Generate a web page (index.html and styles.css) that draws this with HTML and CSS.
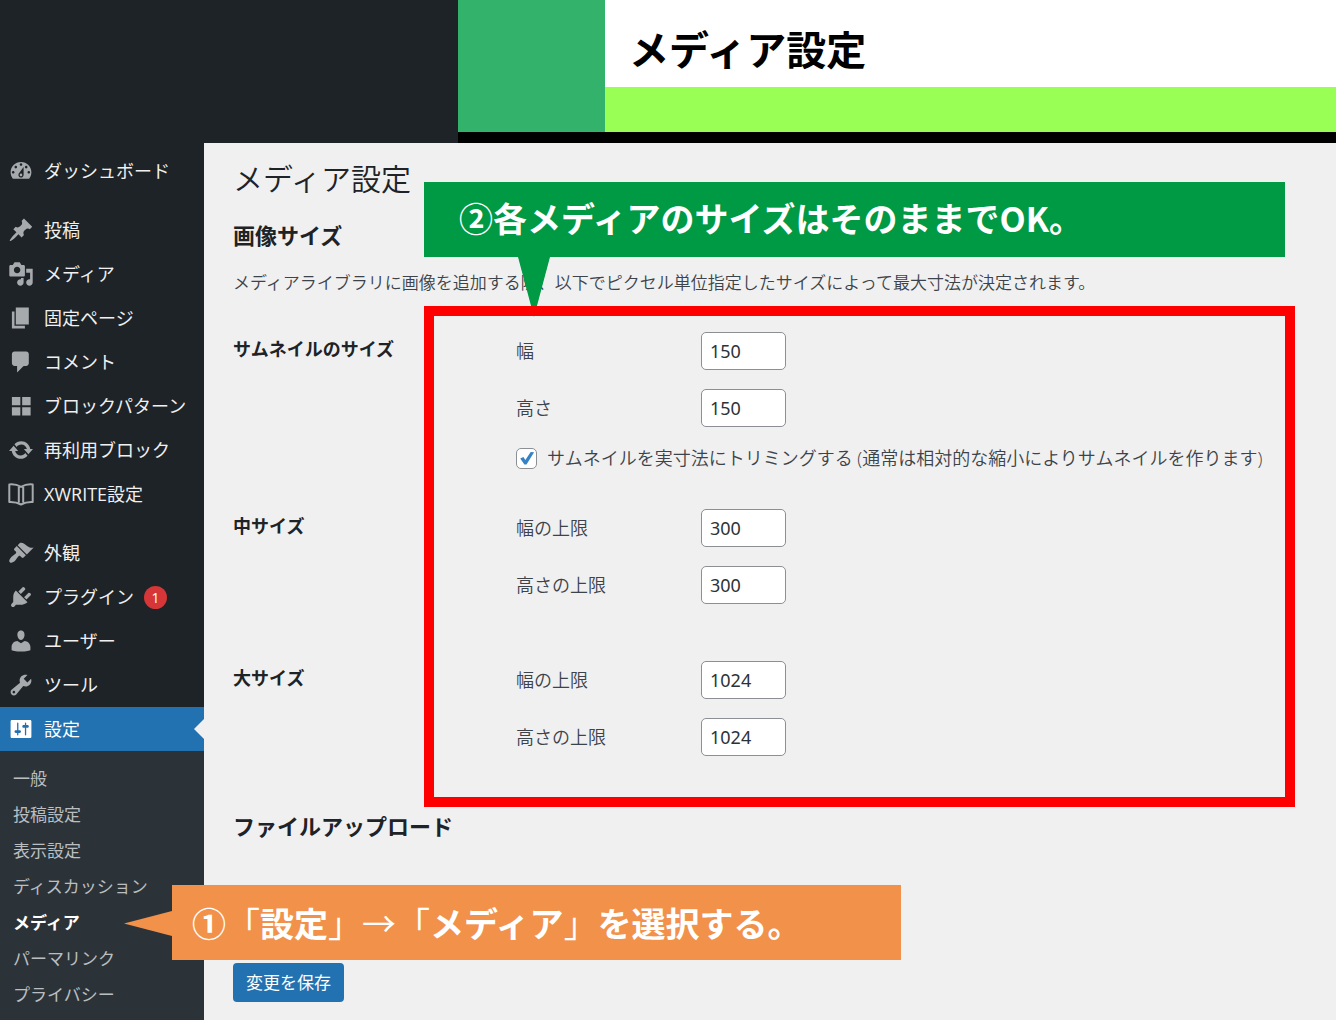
FILE: index.html
```html
<!DOCTYPE html>
<html lang="ja">
<head>
<meta charset="utf-8">
<meta name="viewport" content="width=device-width, initial-scale=1">
<title>メディア設定</title>
<link rel="stylesheet" href="styles.css">
</head>
<body>
<header class="banner">
  <div class="banner-panel">
    <div class="banner-block"></div>
    <div class="banner-title">メディア設定</div>
    <div class="banner-stripe"></div>
  </div>
</header>
<div class="app">
  <nav class="sidebar" aria-label="メインメニュー">
    <ul class="menu">
      <li><a class="menu-link" href="#"><svg class="icon" viewBox="0 0 20 20"><path fill-rule="evenodd" d="M3.76 16h12.48c1.1-1.37 1.76-3.11 1.76-5 0-4.42-3.58-8-8-8s-8 3.58-8 8c0 1.89.66 3.63 1.76 5zM10 4c.55 0 1 .45 1 1s-.45 1-1 1-1-.45-1-1 .45-1 1-1zM6 6c.55 0 1 .45 1 1s-.45 1-1 1-1-.45-1-1 .45-1 1-1zm8 0c.55 0 1 .45 1 1s-.45 1-1 1-1-.45-1-1 .45-1 1-1zm-5.37 5.55L12 7v6c0 1.1-.9 2-2 2s-2-.9-2-2c0-.57.24-1.08.63-1.45zM4 10c.55 0 1 .45 1 1s-.45 1-1 1-1-.45-1-1 .45-1 1-1zm12 0c.55 0 1 .45 1 1s-.45 1-1 1-1-.45-1-1 .45-1 1-1zm-5 3c0-.55-.45-1-1-1s-1 .45-1 1 .45 1 1 1 1-.45 1-1z"/></svg>ダッシュボード</a></li>
      <li class="group-start"><a class="menu-link" href="#"><svg class="icon" viewBox="0 0 20 20"><path d="M10.44 3.02l1.82-1.82 6.36 6.35-1.83 1.82c-1.05-.68-2.48-.57-3.41.36l-.75.75c-.92.93-1.04 2.35-.35 3.41l-1.83 1.82-2.41-2.41-2.8 2.79c-.42.42-3.38 2.71-3.8 2.29s1.86-3.39 2.28-3.81l2.79-2.79L4.1 9.36l1.83-1.82c1.05.69 2.48.57 3.4-.36l.75-.75c.93-.92 1.05-2.35.36-3.41z"/></svg>投稿</a></li>
      <li><a class="menu-link" href="#"><svg class="icon" viewBox="0 0 20 20"><path fill-rule="evenodd" d="M13 11V4c0-.55-.45-1-1-1h-1.67L9 1H5L3.67 3H2c-.55 0-1 .45-1 1v7c0 .55.45 1 1 1h10c.55 0 1-.45 1-1zM7 4.5c1.38 0 2.5 1.12 2.5 2.5S8.38 9.5 7 9.5 4.5 8.38 4.5 7 5.62 4.5 7 4.5zM14 6h5v10.5c0 1.38-1.12 2.5-2.5 2.5S14 17.88 14 16.5s1.12-2.5 2.5-2.5c.17 0 .34.02.5.05V9h-3V6zm-4 8.05V13h2v3.5c0 1.38-1.12 2.5-2.5 2.5S7 17.88 7 16.5 8.12 14 9.5 14c.17 0 .34.02.5.05z"/></svg>メディア</a></li>
      <li><a class="menu-link" href="#"><svg class="icon" viewBox="0 0 20 20"><path d="M6 15V2h10v13H6zm-1 1h8v2H3V5h2v11z"/></svg>固定ページ</a></li>
      <li><a class="menu-link" href="#"><svg class="icon" viewBox="0 0 20 20"><path d="M5 2h9c1.1 0 2 .9 2 2v7c0 1.1-.9 2-2 2h-2l-5 5v-5H5c-1.1 0-2-.9-2-2V4c0-1.1.9-2 2-2z"/></svg>コメント</a></li>
      <li><a class="menu-link" href="#"><svg class="icon" viewBox="0 0 20 20"><path d="M3 3h6.500v6.500H3zM10.900 3h6.500v6.500h-6.500zM3 10.900h6.500v6.500H3zM10.900 10.900h6.500v6.500h-6.500z"/></svg>ブロックパターン</a></li>
      <li><a class="menu-link" href="#"><svg class="icon" viewBox="0 0 20 20"><path d="M10.200 3.280c3.530 0 6.430 2.610 6.920 6h2.080l-3.500 4-3.500-4h2.320c-.45-1.970-2.210-3.450-4.320-3.450-1.450 0-2.730.71-3.540 1.780L4.950 5.660C6.230 4.200 8.110 3.280 10.200 3.280zm-.4 13.440c-3.520 0-6.430-2.610-6.920-6H.8l3.500-4c1.170 1.330 2.330 2.670 3.500 4H5.480c.45 1.970 2.210 3.450 4.320 3.450 1.450 0 2.730-.71 3.540-1.780l1.710 1.950c-1.280 1.460-3.150 2.380-5.250 2.380z"/></svg>再利用ブロック</a></li>
      <li><a class="menu-link" href="#"><svg class="icon" viewBox="0 0 26 26"><path fill="none" stroke="currentColor" stroke-width="2" stroke-linejoin="round" d="M1.300 3.500C5 3.100 9 3.600 13 5.800 17 3.600 21 3.100 24.700 3.500v17.500C21 20.800 17 21.300 13 23.500 9 21.300 5 20.800 1.300 21zM10.800 6v15.500M15.200 6v15.500"/></svg>XWRITE設定</a></li>
      <li class="group-start"><a class="menu-link" href="#"><svg class="icon" viewBox="0 0 20 20"><path d="M14.480 11.060L7.410 3.990l1.500-1.500c.5-.56 2.300-.47 3.510.32 1.210.8 1.430 1.280 2.910 2.100 1.180.64 2.450 1.260 4.450.85zm-.71.71L6.700 4.700 4.930 6.470c-.39.39-.39 1.020 0 1.410l1.060 1.060c.39.39.39 1.030 0 1.420-.6.6-1.430 1.110-2.210 1.690-.35.26-.7.53-1.010.84C1.430 14.230.4 16.080 1.400 17.070c.99 1 2.840-.03 4.180-1.360.31-.31.58-.66.85-1.020.57-.78 1.080-1.610 1.690-2.210.39-.39 1.020-.39 1.410 0l1.060 1.060c.39.39 1.020.39 1.410 0z"/></svg>外観</a></li>
      <li><a class="menu-link" href="#"><svg class="icon" viewBox="0 0 20 20"><path d="M13.110 4.360L9.870 7.600 8 5.730l3.240-3.240c.35-.34 1.050-.2 1.560.32.52.51.66 1.210.31 1.550zm-8 1.770l.91-1.120 9.010 9.010-1.190.84c-.71.71-2.630 1.160-3.820 1.160H6.140L4.900 17.260c-.59.59-1.540.59-2.120 0-.59-.58-.59-1.530 0-2.120l1.240-1.240v-3.880c0-1.130.4-3.190 1.090-3.890zm7.260 3.970l3.240-3.240c.34-.35 1.040-.21 1.550.31.52.51.66 1.210.31 1.550l-3.240 3.250z"/></svg>プラグイン<span class="badge">1</span></a></li>
      <li><a class="menu-link" href="#"><svg class="icon" viewBox="0 0 20 20"><path d="M10 9.250c-2.270 0-2.730-3.440-2.730-3.440C7 4.020 7.820 2 9.970 2c2.160 0 2.980 2.020 2.710 3.810 0 0-.41 3.440-2.680 3.440zm0 2.570L12.720 10c2.390 0 4.520 2.330 4.520 4.530v2.490s-3.650 1.130-7.240 1.130c-3.650 0-7.240-1.130-7.240-1.130v-2.490c0-2.250 1.940-4.480 4.470-4.480z"/></svg>ユーザー</a></li>
      <li><a class="menu-link" href="#"><svg class="icon" viewBox="0 0 20 20"><path fill-rule="evenodd" d="M16.680 9.770c-1.340 1.340-3.300 1.670-4.950.99l-5.410 6.520c-.99.99-2.590.99-3.580 0s-.99-2.590 0-3.570l6.520-5.420c-.68-1.650-.35-3.610.99-4.950 1.280-1.280 3.120-1.620 4.720-1.060l-2.890 2.890 2.820 2.820 2.860-2.870c.53 1.580.18 3.390-1.080 4.650zM3.810 16.210c.4.39 1.040.39 1.430 0 .4-.4.4-1.040 0-1.430-.39-.4-1.030-.4-1.430 0-.39.39-.39 1.030 0 1.430z"/></svg>ツール</a></li>
      <li><a class="menu-link current" href="#"><svg class="icon" viewBox="0 0 20 20"><path fill-rule="evenodd" d="M18 16V4c0-.55-.45-1-1-1H3c-.55 0-1 .45-1 1v12c0 .55.45 1 1 1h14c.55 0 1-.45 1-1zM8 11h1c.55 0 1 .45 1 1s-.45 1-1 1H8v1.500c0 .28-.22.5-.5.5s-.5-.22-.5-.5V13H6c-.55 0-1-.45-1-1s.45-1 1-1h1V5.500c0-.28.22-.5.5-.5s.5.220.5.500V11zm5-2h-1c-.55 0-1-.45-1-1s.45-1 1-1h1V5.500c0-.28.22-.5.5-.5s.5.220.5.500V7h1c.55 0 1 .45 1 1s-.45 1-1 1h-1v5.500c0 .28-.22.5-.5.5s-.5-.22-.5-.5V9z"/></svg>設定</a></li>
    </ul>
    <ul class="submenu">
      <li><a class="submenu-link" href="#">一般</a></li>
      <li><a class="submenu-link" href="#">投稿設定</a></li>
      <li><a class="submenu-link" href="#">表示設定</a></li>
      <li><a class="submenu-link" href="#">ディスカッション</a></li>
      <li><a class="submenu-link active" href="#" aria-current="page">メディア</a></li>
      <li><a class="submenu-link" href="#">パーマリンク</a></li>
      <li><a class="submenu-link" href="#">プライバシー</a></li>
    </ul>
  </nav>
  <main class="content">
    <h1 class="page-title">メディア設定</h1>
    <form class="settings">
      <h2 class="section-title">画像サイズ</h2>
      <p class="description">メディアライブラリに画像を追加する際、以下でピクセル単位指定したサイズによって最大寸法が決定されます。</p>
      <div class="sizes">
        <div class="size-row" role="group" aria-labelledby="thumb-title">
          <h3 class="size-title" id="thumb-title">サムネイルのサイズ</h3>
          <div class="fields">
            <div class="field"><label class="field-label" for="thumb-w">幅</label><input class="number" id="thumb-w" type="text" inputmode="numeric" value="150"></div>
            <div class="field"><label class="field-label" for="thumb-h">高さ</label><input class="number" id="thumb-h" type="text" inputmode="numeric" value="150"></div>
            <div class="check-row"><input class="check" id="crop" type="checkbox" checked><label for="crop">サムネイルを実寸法にトリミングする (通常は相対的な縮小によりサムネイルを作ります)</label></div>
          </div>
        </div>
        <div class="size-row" role="group" aria-labelledby="medium-title">
          <h3 class="size-title" id="medium-title">中サイズ</h3>
          <div class="fields">
            <div class="field"><label class="field-label" for="medium-w">幅の上限</label><input class="number" id="medium-w" type="text" inputmode="numeric" value="300"></div>
            <div class="field"><label class="field-label" for="medium-h">高さの上限</label><input class="number" id="medium-h" type="text" inputmode="numeric" value="300"></div>
          </div>
        </div>
        <div class="size-row" role="group" aria-labelledby="large-title">
          <h3 class="size-title" id="large-title">大サイズ</h3>
          <div class="fields">
            <div class="field"><label class="field-label" for="large-w">幅の上限</label><input class="number" id="large-w" type="text" inputmode="numeric" value="1024"></div>
            <div class="field"><label class="field-label" for="large-h">高さの上限</label><input class="number" id="large-h" type="text" inputmode="numeric" value="1024"></div>
          </div>
        </div>
        <div class="highlight"></div>
      </div>
      <h2 class="section-title upload-title">ファイルアップロード</h2>
      <button class="save" type="submit">変更を保存</button>
    </form>
    <div class="callout callout-green">②各メディアのサイズはそのままでOK。</div>
    <div class="callout callout-orange">①<span class="thin">「</span>設定<span class="thin">」→「</span>メディア<span class="thin">」</span>を選択する。</div>
  </main>
</div>
</body>
</html>
```
FILE: styles.css
```css
*,
*::before,
*::after {
  box-sizing: border-box;
}

body {
  display: flex;
  flex-direction: column;
  min-height: 100vh;
  margin: 0;
  background: #1d2327;
  color: #3c434a;
  font-family: "Open Sans", "Noto Sans CJK JP", sans-serif;
  font-size: 18px;
  line-height: 24px;
}

h1,
h2,
h3,
p,
ul {
  margin: 0;
  padding: 0;
}

ul {
  list-style: none;
}

/* Top banner */
.banner {
  padding-left: 458px;
}

.banner-panel {
  display: grid;
  grid-template-columns: 147px 1fr;
  grid-template-rows: 87px 45px;
  background: #fff;
  border-bottom: 11px solid #000;
}

.banner-block {
  grid-row: 1 / 3;
  background: #33b26c;
}

.banner-title {
  display: flex;
  align-items: center;
  padding: 8px 24px 0;
  color: #000;
  font-family: "Noto Sans CJK JP", sans-serif;
  font-size: 40px;
  font-weight: 700;
  line-height: 60px;
}

.banner-stripe {
  background: #99ff55;
}

/* Sidebar */
.app {
  display: flex;
  flex: 1;
}

.sidebar {
  display: flex;
  flex-direction: column;
  flex: 0 0 204px;
}

.menu {
  padding-top: 6px;
}

.group-start {
  margin-top: 15px;
}

.menu-link {
  display: flex;
  align-items: center;
  gap: 10px;
  height: 44px;
  padding-left: 8px;
  color: #f0f0f1;
  text-decoration: none;
  white-space: nowrap;
}

.icon {
  flex: none;
  width: 26px;
  height: 26px;
  fill: currentColor;
  color: #a7aaad;
}

.current {
  position: relative;
  background: #2271b1;
  color: #fff;
}

.current .icon {
  color: #fff;
}

.current::after {
  content: "";
  position: absolute;
  top: 12px;
  right: 0;
  width: 10px;
  height: 20px;
  background: #f0f0f0;
  clip-path: polygon(100% 0, 0 50%, 100% 100%);
}

.badge {
  width: 23px;
  height: 23px;
  border-radius: 50%;
  background: #d63638;
  color: #fff;
  font-size: 14px;
  line-height: 23px;
  text-align: center;
}

.submenu {
  flex: 1;
  padding: 10px 0 7px;
  background: #2c3338;
}

.submenu-link {
  display: flex;
  align-items: center;
  height: 36px;
  padding-left: 13px;
  color: #bbbec1;
  font-size: 17px;
  text-decoration: none;
}

.active {
  color: #fff;
  font-weight: 700;
}

/* Settings page */
.content {
  position: relative;
  flex: 1;
  min-width: 0;
  padding: 16px 41px 18px 29px;
  background: #f0f0f0;
}

.page-title {
  color: #1d2327;
  font-size: 30px;
  font-weight: 350;
  line-height: 40px;
}

.section-title {
  margin-top: 23px;
  color: #1d2327;
  font-size: 22px;
  font-weight: 700;
  line-height: 26px;
}

.description {
  margin: 23px 0 37px;
  font-size: 17px;
  font-weight: 350;
}

.sizes {
  position: relative;
}

.size-row {
  display: grid;
  grid-template-columns: 283px 1fr;
  min-height: 152px;
  padding-bottom: 39px;
}

.size-title {
  padding-top: 5px;
  color: #1d2327;
  font-size: 18px;
  font-weight: 700;
}

.fields {
  display: flex;
  flex-direction: column;
  gap: 19px;
  font-weight: 350;
}

.field {
  display: flex;
  align-items: center;
}

.field-label {
  width: 185px;
}

.number {
  width: 85px;
  height: 38px;
  padding: 0 8px;
  border: 1px solid #8c8f94;
  border-radius: 5px;
  background: #fff;
  color: #2c3338;
  font: inherit;
  font-family: "Noto Sans", sans-serif;
  font-weight: 400;
}

.check-row {
  display: flex;
  align-items: center;
  gap: 10px;
  white-space: nowrap;
}

.check {
  appearance: none;
  flex: none;
  width: 21px;
  height: 21px;
  margin: 0;
  border: 1px solid #8c8f94;
  border-radius: 5px;
  background: #fff;
}

.check:checked::before {
  content: "";
  display: block;
  width: 19px;
  height: 19px;
  background: #3582c4;
  clip-path: polygon(17% 52%, 34% 45%, 44% 60%, 72% 18%, 90% 20%, 50% 84%, 39% 84%);
}

.upload-title {
  margin-top: 0;
}

.save {
  display: block;
  height: 39px;
  margin-top: 124px;
  padding: 0 13px;
  border: 0;
  border-radius: 4px;
  background: #2271b1;
  color: #fff;
  font: inherit;
  font-size: 17px;
}

/* Annotations laid over the page */
.highlight {
  position: absolute;
  inset: -26px 0 6px 191px;
  z-index: 2;
  border: 10px solid #f00;
  pointer-events: none;
}

.callout {
  position: absolute;
  display: flex;
  align-items: center;
  height: 75px;
  color: #fff;
  font-family: "Noto Sans CJK JP", sans-serif;
  font-size: 34px;
  font-weight: 700;
  line-height: 48px;
  white-space: nowrap;
}

.callout::before {
  content: "";
  position: absolute;
  background: inherit;
}

.callout-green {
  top: 39px;
  right: 51px;
  left: 220px;
  padding: 0 0 4px 35px;
  background: #009944;
}

.callout-green::before {
  top: 75px;
  left: 94px;
  width: 32px;
  height: 60px;
  clip-path: polygon(0 0, 100% 0, 50% 100%);
}

.callout-orange {
  top: 742px;
  left: -32px;
  z-index: 3;
  width: 729px;
  padding-left: 20px;
  background: #f29149;
}

.callout-orange::before {
  top: 26px;
  left: -48px;
  width: 48px;
  height: 25px;
  clip-path: polygon(0 50%, 100% 0, 100% 100%);
}

.thin {
  font-weight: 400;
}
```
